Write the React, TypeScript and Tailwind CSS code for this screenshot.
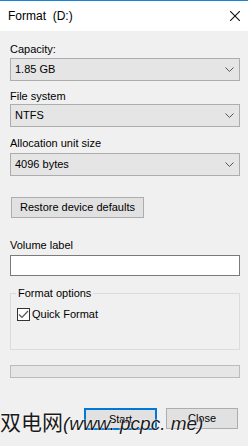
import React from "react";

const font = { fontFamily: '"Liberation Sans", Arial, sans-serif' };

function Chevron() {
  return (
    <svg width="9" height="5" viewBox="0 0 9 5" className="shrink-0">
      <path d="M0.5 0.5 L4.5 4.5 L8.5 0.5" fill="none" stroke="#555" strokeWidth="1" />
    </svg>
  );
}

function Combo({ value }: { value: string }) {
  return (
    <div className="flex h-[23px] items-center justify-between border border-[#adadad] bg-[#e5e5e5] pl-[4px] pr-[5px]">
      <span>{value}</span>
      <Chevron />
    </div>
  );
}

export default function App() {
  return (
    <div
      className="relative h-[446px] w-[248px] overflow-hidden bg-[#f0f0f0] text-[11px] leading-[13px] text-black"
      style={font}
    >
      {/* title bar */}
      <div className="flex h-[31px] items-center justify-between border-t border-[#1883d7] bg-white pl-[8px] pr-[8px]">
        <span className="text-[12px] whitespace-pre">Format  (D:)</span>
        <svg width="10" height="10" viewBox="0 0 10 10">
          <path d="M0 0 L10 10 M10 0 L0 10" stroke="#111" strokeWidth="1.1" />
        </svg>
      </div>

      <div className="flex flex-col pl-[10px] pr-[8px]">
        <div className="mt-[12px]">Capacity:</div>
        <div className="mt-[2px]">
          <Combo value="1.85 GB" />
        </div>

        <div className="mt-[9px]">File system</div>
        <div className="mt-[1px]">
          <Combo value="NTFS" />
        </div>

        <div className="mt-[10px]">Allocation unit size</div>
        <div className="mt-[3px]">
          <Combo value="4096 bytes" />
        </div>

        <button className="ml-[1px] mt-[21px] h-[21px] w-[133px] border border-[#adadad] bg-[#e1e1e1] text-center">
          Restore device defaults
        </button>

        <div className="mt-[21px]">Volume label</div>
        <div className="mt-[3px] h-[21px] border border-[#7a7a7a] bg-white" />

        <fieldset className="mt-[11px] h-[63px] border border-[#dcdcdc]">
          <legend className="ml-[5px] px-[2px]">Format options</legend>
          <label className="ml-[6px] mt-[8px] flex items-center gap-[2px]">
            <span className="flex h-[13px] w-[13px] items-center justify-center border border-[#333] bg-white">
              <svg width="11" height="11" viewBox="0 0 11 11">
                <path d="M1 5.5 L4 8.5 L10 2" fill="none" stroke="#555" strokeWidth="1.2" />
              </svg>
            </span>
            <span>Quick Format</span>
          </label>
        </fieldset>

        <div className="mt-[15px] h-[13px] border border-[#bcbcbc] bg-[#e6e6e6]" />

        <div className="mt-[30px] flex justify-end gap-[9px] pr-[2px]">
          <button className="h-[22px] w-[73px] border-2 border-[#0078d7] bg-[#e1e1e1]">Start</button>
          <button className="h-[21px] w-[72px] border border-[#adadad] bg-[#e1e1e1]">Close</button>
        </div>
      </div>

      {/* watermark overlay */}
      <div className="pointer-events-none absolute left-0 top-[409px] flex items-baseline whitespace-pre text-[#1a1a1a] [text-shadow:0_0_2px_#fff,0_0_1px_#fff]">
        <span className="text-[21px] leading-[24px]" style={{ fontFamily: '"Noto Sans CJK SC", sans-serif' }}>
          双电网
        </span>
        <span className="text-[19px] italic leading-[24px]" style={font}>
          (www. pcpc. me)
        </span>
      </div>
    </div>
  );
}
